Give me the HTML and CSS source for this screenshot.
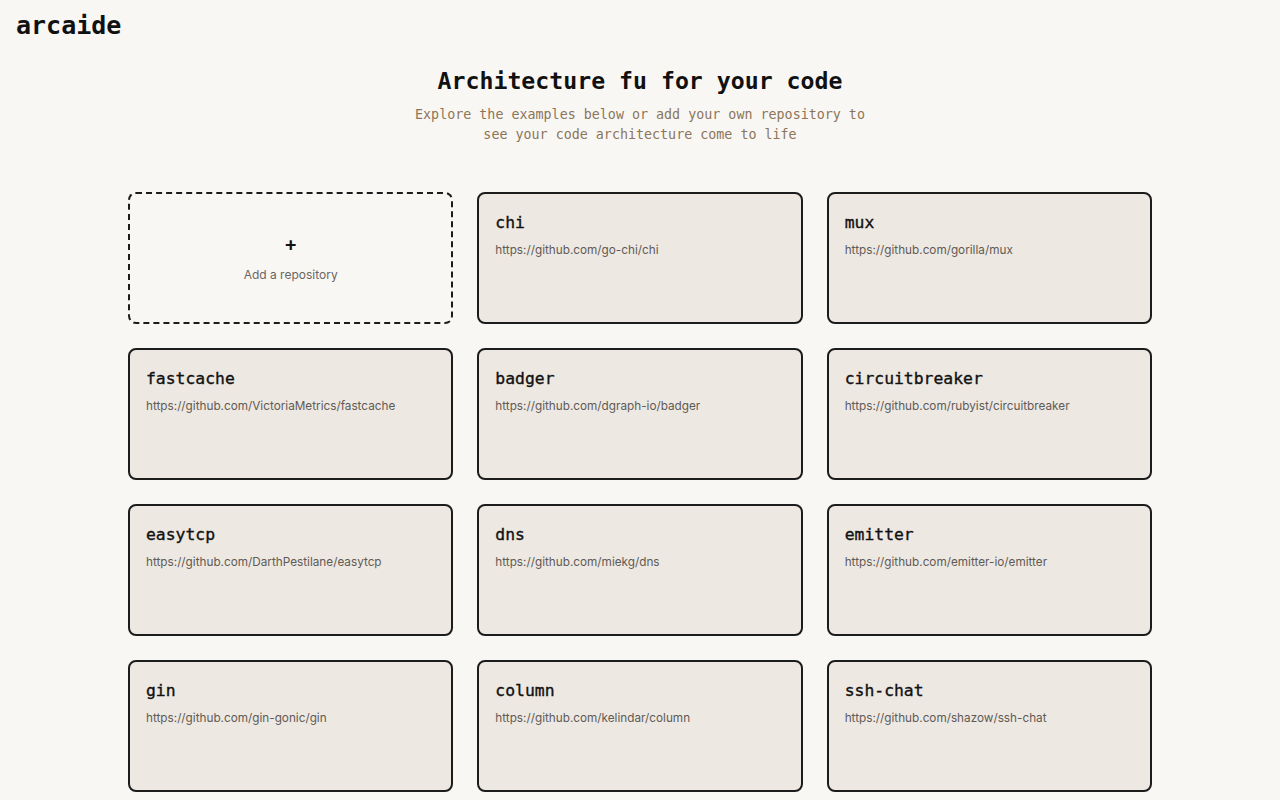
FILE: index.html
```html
<!DOCTYPE html>
<html lang="en">
<head>
<meta charset="utf-8">
<title>arcaide</title>
<link rel="stylesheet" href="styles.css">
</head>
<body>
<header class="topbar">
  <div class="logo">arcaide</div>
</header>
<main class="main">
  <section class="hero">
    <h1 class="hero-title">Architecture fu for your code</h1>
    <p class="hero-sub">Explore the examples below or add your own repository to<br>see your code architecture come to life</p>
  </section>
  <section class="grid">
    <a class="card card-add" href="#">
      <span class="add-plus">+</span>
      <span class="add-label">Add a repository</span>
    </a>
    <a class="card" href="#"><span class="card-name">chi</span><span class="card-url">https://github.com/go-chi/chi</span></a>
    <a class="card" href="#"><span class="card-name">mux</span><span class="card-url">https://github.com/gorilla/mux</span></a>
    <a class="card" href="#"><span class="card-name">fastcache</span><span class="card-url">https://github.com/VictoriaMetrics/fastcache</span></a>
    <a class="card" href="#"><span class="card-name">badger</span><span class="card-url">https://github.com/dgraph-io/badger</span></a>
    <a class="card" href="#"><span class="card-name">circuitbreaker</span><span class="card-url">https://github.com/rubyist/circuitbreaker</span></a>
    <a class="card" href="#"><span class="card-name">easytcp</span><span class="card-url">https://github.com/DarthPestilane/easytcp</span></a>
    <a class="card" href="#"><span class="card-name">dns</span><span class="card-url">https://github.com/miekg/dns</span></a>
    <a class="card" href="#"><span class="card-name">emitter</span><span class="card-url">https://github.com/emitter-io/emitter</span></a>
    <a class="card" href="#"><span class="card-name">gin</span><span class="card-url">https://github.com/gin-gonic/gin</span></a>
    <a class="card" href="#"><span class="card-name">column</span><span class="card-url">https://github.com/kelindar/column</span></a>
    <a class="card" href="#"><span class="card-name">ssh-chat</span><span class="card-url">https://github.com/shazow/ssh-chat</span></a>
  </section>
</main>
</body>
</html>
```
FILE: styles.css
```css
* { box-sizing: border-box; }
html, body { margin: 0; padding: 0; }
body {
  background: #f9f7f4;
  color: #111;
  font-family: "DejaVu Sans Mono", monospace;
}
.topbar {
  padding: 10px 16px 6px;
}
.logo {
  font-size: 25px;
  line-height: 32px;
  font-weight: 700;
  color: #111;
}
.main {
  width: 1024px;
  margin: 0 auto;
  padding-bottom: 40px;
}
.hero {
  text-align: center;
  margin-top: 17px;
}
.hero-title {
  margin: 0;
  font-size: 23.2px;
  line-height: 32px;
  font-weight: 700;
  color: #111;
}
.hero-sub {
  margin: 8px 0 0;
  font-size: 13.35px;
  line-height: 20px;
  color: #8c7558;
}
.grid {
  margin-top: 47px;
  display: grid;
  grid-template-columns: repeat(3, 1fr);
  gap: 24px;
}
.card {
  display: flex;
  flex-direction: column;
  height: 132px;
  padding: 17px 16px 16px;
  background: #ede8e2;
  border: 2px solid #1c1c1c;
  border-radius: 8px;
  text-decoration: none;
  color: inherit;
}
.card-name {
  font-size: 16.4px;
  line-height: 24px;
  font-weight: 400;
  -webkit-text-stroke: 0.35px #111;
  color: #111;
}
.card-url {
  margin-top: 7px;
  font-family: Inter, "Noto Sans", sans-serif;
  font-size: 11.75px;
  line-height: 16px;
  color: #5f5a55;
}
.card-add {
  background: transparent;
  border: 2px dashed #1c1c1c;
  padding: 16px;
  align-items: center;
  justify-content: center;
  gap: 11px;
}
.add-plus {
  font-family: Inter, "Noto Sans", sans-serif;
  font-size: 20px;
  line-height: 20px;
  font-weight: 600;
  color: #111;
  margin-bottom: 2px;
}
.add-label {
  font-family: Inter, "Noto Sans", sans-serif;
  font-size: 12px;
  line-height: 16px;
  color: #6b6660;
}
```
